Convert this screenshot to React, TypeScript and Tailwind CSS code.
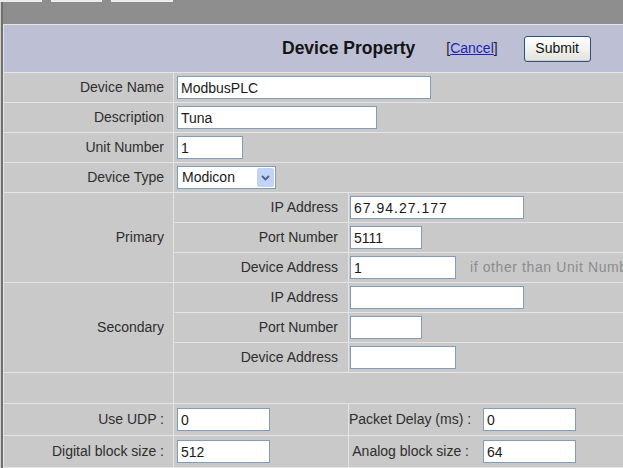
import React from "react";

const Field = ({ value = "", w, tracking = "" }: { value?: string; w: string; tracking?: string }) => (
  <input
    readOnly
    value={value}
    className={`h-[23px] ${w} border border-[#7f9db9] bg-white pl-[3px] text-[14px] text-[#1a1a1a] outline-none ${tracking}`}
  />
);

const Label = ({ children }: { children: React.ReactNode }) => (
  <td className="bg-[#c9c9c9] pr-[9px] text-right align-middle text-[14px] text-[#2e2e2e]">{children}</td>
);

const App = () => {
  const subRows = (ip: string, port: string, addr: string, name: string, hint: boolean) => [
    { label: "IP Address", field: <Field value={ip} w="w-[174px]" tracking={ip ? "tracking-[1px]" : ""} /> },
    { label: "Port Number", field: <Field value={port} w="w-[72px]" /> },
    {
      label: "Device Address",
      field: (
        <div className="flex items-center">
          <Field value={addr} w="w-[106px]" />
          {hint && <span className="ml-[14px] whitespace-nowrap text-[14px] tracking-[0.6px] text-[#8c8c8c]">if other than Unit Number</span>}
        </div>
      ),
    },
  ].map((r, i) => (
    <tr key={name + r.label} className="h-[29px]">
      {i === 0 && (
        <td rowSpan={3} className="bg-[#c9c9c9] pr-[9px] text-right align-middle text-[14px] text-[#2e2e2e]">
          {name}
        </td>
      )}
      <td className="bg-[#c9c9c9] pr-[10px] text-right text-[14px] text-[#2e2e2e]">{r.label}</td>
      <td className="bg-[#c9c9c9] pl-px">{r.field}</td>
    </tr>
  ));

  return (
    <div className="flex h-[468px] w-[623px] overflow-hidden bg-[#8e8e8e] font-['Liberation_Sans',Arial,sans-serif]">
      <div className="w-px shrink-0 bg-[#cfcfcf]" />
      <div className="w-[2px] shrink-0 bg-[#6f6f6f]" />
      <div className="flex min-w-0 flex-1 flex-col">
        {/* toolbar remains, scrolled off the top */}
        <div className="relative z-10 -ml-[3px] flex h-[24px] shrink-0 items-start">
          <div className="h-[2px] w-[42px] bg-[#ececec]" />
          <div className="ml-[9px] h-[2px] w-[51px] bg-[#ececec]" />
          <div className="ml-[9px] h-[2px] w-[62px] bg-[#ececec]" />
        </div>

        <table className="w-[720px] table-fixed border-separate border-spacing-px bg-[#e4e4e4]">
          <colgroup>
            <col className="w-[169px]" />
            <col className="w-[174px]" />
            <col />
          </colgroup>
          <tbody>
            <tr className="h-[47px]">
              <td colSpan={3} className="bg-[#bdc0d5]">
                <div className="flex items-center pl-[278px]">
                  <span className="text-[17.5px] font-bold text-[#141414]">Device Property</span>
                  <span className="ml-[31px] text-[14px] text-[#1b1b1b]">
                    [<span className="text-[#1f1fb8] underline">Cancel</span>]
                  </span>
                  <button className="ml-[26px] h-[26px] w-[67px] rounded-[3px] border border-[#2d4f83] bg-linear-to-b from-white to-[#e4e4dd] text-[14px] text-[#111] shadow-[inset_0_-1px_0_#cfcfc6]">
                    Submit
                  </button>
                </div>
              </td>
            </tr>
            <tr className="h-[29px]">
              <Label>Device Name</Label>
              <td colSpan={2} className="bg-[#c9c9c9] pl-[3px]">
                <Field value="ModbusPLC" w="w-[254px]" />
              </td>
            </tr>
            <tr className="h-[29px]">
              <Label>Description</Label>
              <td colSpan={2} className="bg-[#c9c9c9] pl-[3px]">
                <Field value="Tuna" w="w-[200px]" />
              </td>
            </tr>
            <tr className="h-[29px]">
              <Label>Unit Number</Label>
              <td colSpan={2} className="bg-[#c9c9c9] pl-[3px]">
                <Field value="1" w="w-[66px]" />
              </td>
            </tr>
            <tr className="h-[29px]">
              <Label>Device Type</Label>
              <td colSpan={2} className="bg-[#c9c9c9] pl-[3px]">
                <div className="flex h-[23px] w-[99px] items-center border border-[#7f9db9] bg-white">
                  <span className="flex-1 pl-[4px] text-[14px] text-[#1a1a1a]">Modicon</span>
                  <span className="mr-px flex h-[19px] w-[17px] items-center justify-center rounded-[2px] bg-[#c3d3f7]">
                    <svg width="9" height="6" viewBox="0 0 9 6">
                      <path d="M1 1 L4.5 4.5 L8 1" fill="none" stroke="#4d6185" strokeWidth="1.8" />
                    </svg>
                  </span>
                </div>
              </td>
            </tr>
            {subRows("67.94.27.177", "5111", "1", "Primary", true)}
            {subRows("", "", "", "Secondary", false)}
            <tr className="h-[30px]">
              <td className="bg-[#c9c9c9]" />
              <td colSpan={2} className="bg-[#c9c9c9]" />
            </tr>
            {[
              ["Use UDP :", "0", "Packet Delay (ms) :", "0"],
              ["Digital block size :", "512", "Analog block size :", "64"],
            ].map(([l1, v1, l2, v2]) => (
              <tr key={l1} className="h-[31px]">
                <Label>{l1}</Label>
                <td className="bg-[#c9c9c9] pl-[3px]">
                  <Field value={v1} w="w-[93px]" />
                </td>
                <td className="bg-[#c9c9c9]">
                  <div className="flex items-center">
                    <span className="w-[134px] whitespace-nowrap pr-[14px] text-right text-[14px] text-[#2e2e2e]">{l2}</span>
                    <Field value={v2} w="w-[93px]" />
                  </div>
                </td>
              </tr>
            ))}
            <tr className="h-[20px]">
              <td colSpan={3} className="bg-[#bdc0d5]" />
            </tr>
          </tbody>
        </table>
      </div>
    </div>
  );
};

export default App;
